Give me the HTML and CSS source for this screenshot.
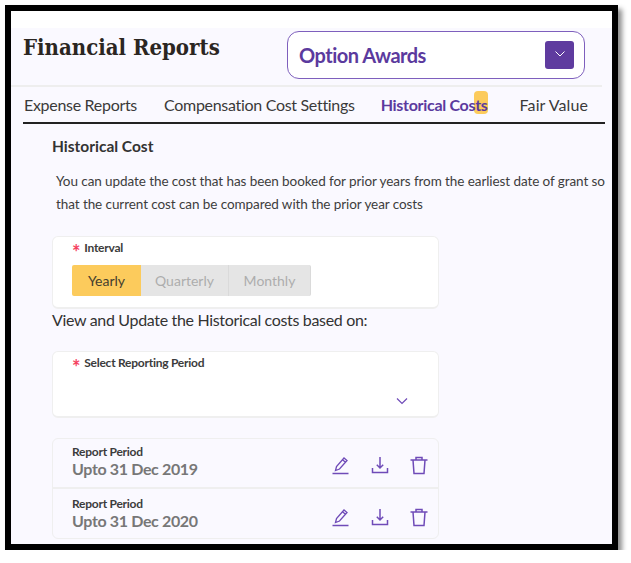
FILE: index.html
```html
<!DOCTYPE html>
<html lang="en">
<head>
    <meta charset="UTF-8">
    <title>Financial Reports</title>
    <link rel="stylesheet" href="styles.css">
</head>
<body>
    <div class="frame">
        <div class="top-gap"></div>
        <!-- Header -->
        <div class="header">
            <h1>Financial Reports</h1>
            <div class="award-select">
                <span>Option Awards</span>
                <button class="award-btn">
                    <svg width="12" height="12" viewBox="0 0 12 12"><path d="M1.500 3.500 6 8l4.500-4.500" fill="none" stroke="#fff" stroke-width="1"/></svg>
                </button>
            </div>
        </div>
        <!-- Tabs -->
        <div class="tabs">
            <div class="tab">Expense Reports</div>
            <div class="tab">Compensation Cost Settings</div>
            <div class="tab active"><span class="marker"></span><span class="tab-text">Historical Costs</span></div>
            <div class="tab">Fair Value</div>
        </div>
        <div class="content">
            <h2>Historical Cost</h2>
            <p class="intro">You can update the cost that has been booked for prior years from the earliest date of grant so that the current cost can be compared with the prior year costs</p>

            <div class="card interval-card">
                <div class="label"><span class="req">*</span>Interval</div>
                <div class="segments">
                    <div class="seg on">Yearly</div>
                    <div class="seg quarterly">Quarterly</div>
                    <div class="seg monthly">Monthly</div>
                </div>
            </div>
            <div class="view-text">View and Update the Historical costs based on:</div>

            <div class="card period-card">
                <div class="label"><span class="req">*</span>Select Reporting Period</div>
                <svg class="period-chevron" width="12" height="8" viewBox="0 0 12 8"><path d="M1 1.500 6 6.500l5-5" fill="none" stroke="#6f4bb8" stroke-width="1.200"/></svg>
            </div>

            <div class="report-list">
                <div class="report-row">
                    <div>
                        <div class="report-label">Report Period</div>
                        <div class="report-value">Upto 31 Dec 2019</div>
                    </div>
                    <div class="actions">
                        <svg width="20" height="20" viewBox="0 0 20 20"><path d="M1.500 18.500h16M4.500 15.500l1-4 7.500-8.500 3 2.500-7.500 8.500zM11.500 4.700l3 2.500" fill="none" stroke="#6f4bb8" stroke-width="1.300"/></svg>
                        <svg width="20" height="20" viewBox="0 0 20 20"><path d="M10 2v11M6.800 9.800 10 13l3.200-3.200M2.500 13v4.500h15V13" fill="none" stroke="#6f4bb8" stroke-width="1.500"/></svg>
                        <svg width="20" height="20" viewBox="0 0 20 20"><path d="M1.500 5h17M7 5V2.500h6V5M4 5l1 13.500h10L16 5" fill="none" stroke="#6f4bb8" stroke-width="1.500"/></svg>
                    </div>
                </div>
                <div class="report-row">
                    <div>
                        <div class="report-label">Report Period</div>
                        <div class="report-value">Upto 31 Dec 2020</div>
                    </div>
                    <div class="actions">
                        <svg width="20" height="20" viewBox="0 0 20 20"><path d="M1.500 18.500h16M4.500 15.500l1-4 7.500-8.500 3 2.500-7.500 8.500zM11.500 4.700l3 2.500" fill="none" stroke="#6f4bb8" stroke-width="1.300"/></svg>
                        <svg width="20" height="20" viewBox="0 0 20 20"><path d="M10 2v11M6.800 9.800 10 13l3.200-3.200M2.500 13v4.500h15V13" fill="none" stroke="#6f4bb8" stroke-width="1.500"/></svg>
                        <svg width="20" height="20" viewBox="0 0 20 20"><path d="M1.500 5h17M7 5V2.500h6V5M4 5l1 13.500h10L16 5" fill="none" stroke="#6f4bb8" stroke-width="1.500"/></svg>
                    </div>
                </div>
            </div>
        </div>
    </div>
</body>
</html>
```

FILE: styles.css
```css
body {
    margin: 0;
    background: #fff;
    font-family: Lato, sans-serif;
    color: #333;
    overflow: hidden;
}
.frame {
    margin: 5px 0 0 5px;
    width: 601px;
    height: 533px;
    border: 6px solid #000;
    box-shadow: 4px 4px 5px rgba(0, 0, 0, 0.45);
    background: #faf9ff;
    overflow: hidden;
}
.top-gap {
    height: 17px;
    background: #fff;
}
.header {
    height: 59px;
    margin-right: 10px;
    padding-left: 12px;
    display: flex;
    align-items: flex-start;
    border-bottom: 2px solid #eeeeee;
    box-sizing: border-box;
}
h1 {
    margin: 4px 0 0 0;
    width: 264px;
    font-family: "DejaVu Serif Condensed", "DejaVu Serif", serif;
    font-size: 22px;
    line-height: 30px;
    font-weight: bold;
    color: #2b2622;
}
.award-select {
    width: 298px;
    height: 48px;
    margin-top: 3px;
    border: 1px solid #7e5fbd;
    border-radius: 12px;
    background: #fff;
    display: flex;
    align-items: center;
    justify-content: space-between;
    padding: 0 10px 0 11px;
    box-sizing: border-box;
    font-size: 20px;
    font-weight: bold;
    letter-spacing: -0.5px;
    color: #5b3a9e;
}
.award-btn {
    width: 29px;
    height: 28px;
    border: none;
    border-radius: 3px;
    background: #5f3b9f;
    padding: 0 0 3px 0;
    display: flex;
    align-items: center;
    justify-content: center;
}
.tabs {
    height: 36px;
    width: 582px;
    margin-left: 12px;
    margin-top: -1px;
    border-bottom: 2px solid #222;
    display: flex;
    align-items: center;
    font-size: 16px;
    letter-spacing: -0.3px;
    color: #3a3a3a;
}
.tab {
    margin-right: 25px;
    padding-left: 1px;
    white-space: nowrap;
}
.tab:first-child {
    margin-right: 26px;
}
.tab:last-child {
    letter-spacing: 0.1px;
}
.tab.active {
    position: relative;
    font-weight: bold;
    color: #5b3a9e;
    margin-right: 31px;
    letter-spacing: -0.3px;
}
.marker {
    position: absolute;
    right: 0;
    top: -4px;
    width: 14px;
    height: 23px;
    border-radius: 4px;
    background: #fccb5c;
}
.tab-text {
    position: relative;
}
.content {
    padding: 13px 0 0 41px;
}
h2 {
    margin: 0;
    font-size: 15.500px;
    line-height: 18px;
    font-weight: bold;
    color: #333;
}
.intro {
    margin: 15px 0 0 4px;
    width: 555px;
    font-size: 13.500px;
    letter-spacing: -0.08px;
    line-height: 23px;
    color: #3d3d3d;
}
.card {
    width: 387px;
    box-sizing: border-box;
    background: #fff;
    border: 1px solid #efefef;
    border-bottom-width: 2px;
    border-radius: 6px;
    padding: 4px 0 0 19px;
}
.interval-card {
    height: 73px;
    margin-top: 20px;
}
.period-card {
    position: relative;
    height: 67px;
    margin-top: 21px;
}
.label {
    font-size: 12px;
    line-height: 14px;
    font-weight: bold;
    letter-spacing: -0.25px;
    color: #3c3c3c;
}
.req {
    font-size: 20px;
    line-height: 0;
    vertical-align: -8px;
    color: #f5425f;
    margin-right: 4px;
}
.segments {
    display: flex;
    margin-top: 10px;
    font-size: 14px;
    height: 31px;
    line-height: 31px;
    text-align: center;
}
.seg {
    background: #e5e5e5;
    color: #adadad;
    border-right: 1px solid #dadada;
    box-sizing: border-box;
}
.seg.on {
    width: 69px;
    background: #fccb5c;
    color: #45402f;
    border-radius: 2px 0 0 2px;
    border-right: none;
}
.seg.quarterly {
    width: 88px;
}
.seg.monthly {
    width: 82px;
    border-radius: 0 2px 2px 0;
}
.view-text {
    font-size: 16px;
    letter-spacing: -0.33px;
    line-height: 20px;
    margin-top: 1px;
    color: #333;
}
.period-chevron {
    position: absolute;
    left: 343px;
    top: 45px;
}
.report-list {
    width: 387px;
    height: 101px;
    box-sizing: border-box;
    margin-top: 20px;
    border: 1px solid #efefef;
    border-radius: 6px;
}
.report-row {
    height: 50px;
    box-sizing: border-box;
    padding: 6px 9px 0 19px;
    display: flex;
    justify-content: space-between;
}
.report-row:first-child {
    border-bottom: 2px solid #efefef;
}
.report-row:last-child {
    padding-top: 8px;
}
.report-label {
    font-size: 12px;
    line-height: 14px;
    font-weight: bold;
    letter-spacing: -0.25px;
    color: #3c3c3c;
}
.report-value {
    font-size: 16px;
    line-height: 19px;
    font-weight: bold;
    letter-spacing: -0.35px;
    color: #777;
}
.actions {
    display: flex;
    gap: 19px;
    padding-top: 10px;
}
```
